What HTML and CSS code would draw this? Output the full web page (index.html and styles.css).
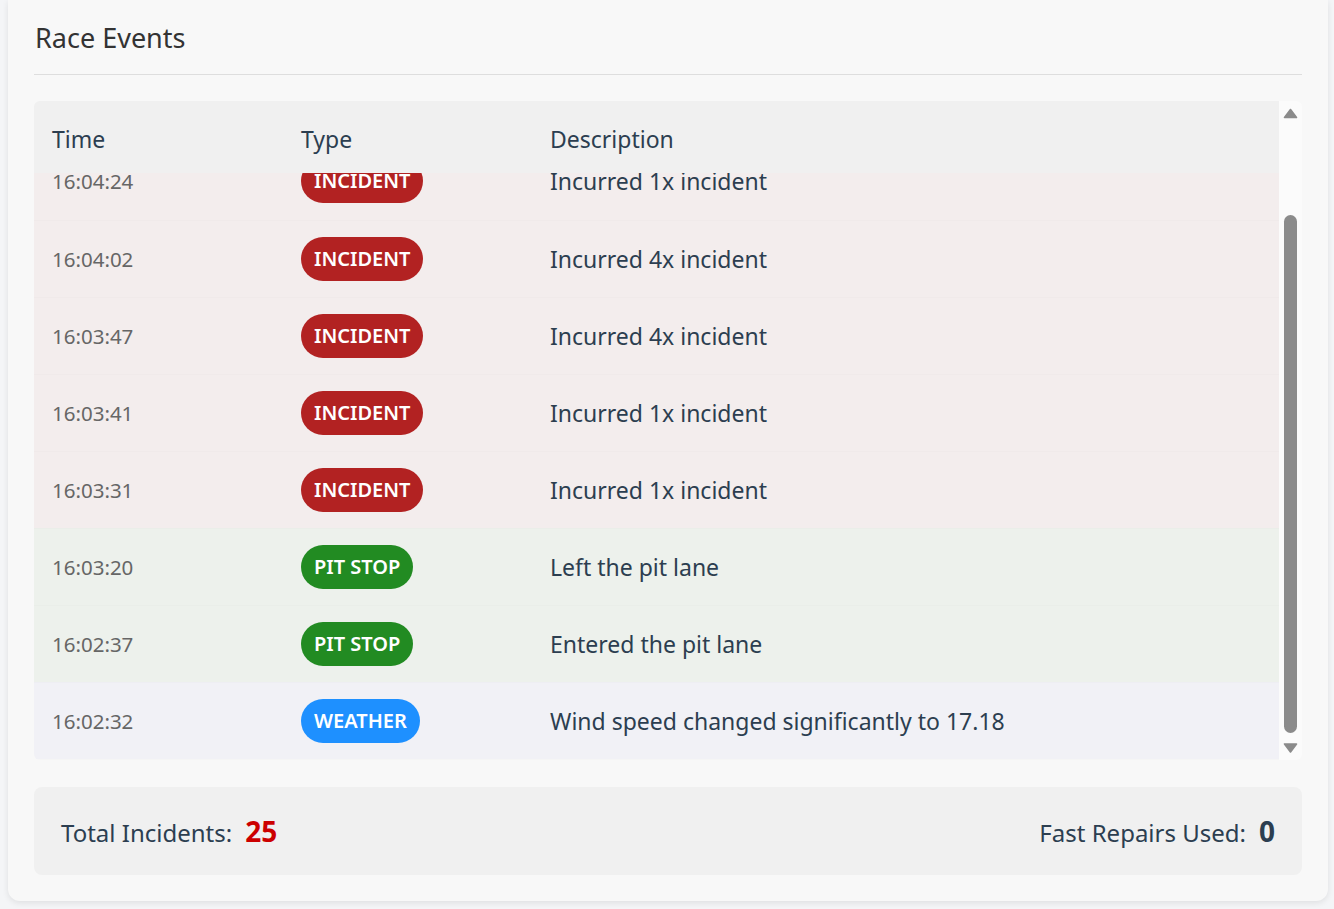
FILE: index.html
```html
<!DOCTYPE html>
<html lang="en">
<head>
<meta charset="utf-8">
<title>Race Events</title>
<link rel="stylesheet" href="styles.css">
</head>
<body>
<div class="page">
  <section class="card">
    <h2 class="card-title">Race Events</h2>
    <div class="events-frame">
      <div class="events-scroll">
        <table class="events">
          <thead>
            <tr>
              <th class="col-time">Time</th>
              <th class="col-type">Type</th>
              <th class="col-desc">Description</th>
            </tr>
          </thead>
          <tbody>
            <tr class="row-incident">
              <td class="time">16:04:24</td>
              <td><span class="badge badge-incident">INCIDENT</span></td>
              <td class="desc">Incurred 1x incident</td>
            </tr>
            <tr class="row-incident">
              <td class="time">16:04:02</td>
              <td><span class="badge badge-incident">INCIDENT</span></td>
              <td class="desc">Incurred 4x incident</td>
            </tr>
            <tr class="row-incident">
              <td class="time">16:03:47</td>
              <td><span class="badge badge-incident">INCIDENT</span></td>
              <td class="desc">Incurred 4x incident</td>
            </tr>
            <tr class="row-incident">
              <td class="time">16:03:41</td>
              <td><span class="badge badge-incident">INCIDENT</span></td>
              <td class="desc">Incurred 1x incident</td>
            </tr>
            <tr class="row-incident">
              <td class="time">16:03:31</td>
              <td><span class="badge badge-incident">INCIDENT</span></td>
              <td class="desc">Incurred 1x incident</td>
            </tr>
            <tr class="row-pit">
              <td class="time">16:03:20</td>
              <td><span class="badge badge-pit">PIT STOP</span></td>
              <td class="desc">Left the pit lane</td>
            </tr>
            <tr class="row-pit">
              <td class="time">16:02:37</td>
              <td><span class="badge badge-pit">PIT STOP</span></td>
              <td class="desc">Entered the pit lane</td>
            </tr>
            <tr class="row-weather">
              <td class="time">16:02:32</td>
              <td><span class="badge badge-weather">WEATHER</span></td>
              <td class="desc">Wind speed changed significantly to 17.18</td>
            </tr>
          </tbody>
        </table>
      </div>
      <div class="scrollbar" aria-hidden="true">
        <svg class="sb-arrow" width="23" height="20" viewBox="0 0 23 20"><path d="M11.5 8.5 L17.5 16.5 L5.5 16.5 Z" fill="#8b8b8b" stroke="#8b8b8b" stroke-width="1.6" stroke-linejoin="round"/></svg>
        <div class="sb-track">
          <div class="sb-thumb" style="margin-top: 94px; height: 518px;"></div>
        </div>
        <svg class="sb-arrow" width="23" height="20" viewBox="0 0 23 20"><path d="M5.5 4 L17.5 4 L11.5 12 Z" fill="#8b8b8b" stroke="#8b8b8b" stroke-width="1.6" stroke-linejoin="round"/></svg>
      </div>
    </div>
    <div class="summary">
      <div class="stat">
        <span class="stat-label">Total Incidents:</span>
        <span class="stat-value stat-danger">25</span>
      </div>
      <div class="stat">
        <span class="stat-label">Fast Repairs Used:</span>
        <span class="stat-value">0</span>
      </div>
    </div>
  </section>
</div>
<script src="script.js"></script>
</body>
</html>
```

FILE: styles.css
```css
* { box-sizing: border-box; }

html, body {
  margin: 0;
  padding: 0;
  background: #f4f5f7;
  font-family: "Noto Sans", "Open Sans", sans-serif;
}

.page {
  padding: 0 6px 7px 8px;
}

.card {
  background: #f8f8f8;
  border-radius: 0 0 12px 12px;
  box-shadow: 0 2px 6px rgba(0, 0, 0, 0.09);
  padding: 0 26px 26px;
}

.card-title {
  margin: 0 0 26px;
  padding: 20px 0 18px 1px;
  font-size: 27px;
  line-height: 36px;
  font-weight: 400;
  color: #333333;
  border-bottom: 1px solid #dedede;
}

.events-frame {
  display: flex;
  height: 659px;
  border-radius: 6px;
  overflow: hidden;
  background: #f8f8f8;
}

.events-scroll {
  flex: 1;
  min-width: 0;
  overflow-y: auto;
  scrollbar-width: none;
}

.events-scroll::-webkit-scrollbar {
  display: none;
}

.scrollbar {
  width: 23px;
  flex: none;
  display: flex;
  flex-direction: column;
  background: #fbfbfb;
}

.sb-arrow {
  display: block;
  flex: none;
}

.sb-track {
  flex: 1;
  display: flex;
  flex-direction: column;
  align-items: center;
}

.sb-thumb {
  width: 13px;
  border-radius: 7px;
  background: #8b8b8b;
}

.events {
  width: 100%;
  border-collapse: collapse;
  table-layout: fixed;
}

.events th {
  position: sticky;
  top: 0;
  z-index: 1;
  background: #f0f0f0;
  text-align: left;
  font-weight: 400;
  font-size: 23px;
  line-height: 28px;
  color: #2c3e50;
  padding: 24px 18px 20px;
}

.col-time { width: 20%; }
.col-type { width: 20%; }
.col-desc { width: 60%; }

.events td {
  padding: 16px 18px;
  vertical-align: middle;
  border-bottom: 1px solid rgba(0, 0, 0, 0.012);
  height: 77px;
}

.row-incident td { background: #f3eded; }
.row-pit td { background: #edf1ec; }
.row-weather td { background: #f1f1f6; }

.time {
  font-size: 20.5px;
  color: #666666;
}

.desc {
  font-size: 23px;
  color: #2c3e50;
}

.badge {
  display: inline-block;
  height: 44px;
  line-height: 44px;
  padding: 0 13px;
  border-radius: 22px;
  color: #ffffff;
  font-size: 20px;
  font-weight: 600;
  vertical-align: middle;
}

.badge-incident { background: #b22222; }
.badge-pit { background: #228b22; }
.badge-weather { background: #1e90ff; }

.summary {
  margin-top: 27px;
  height: 88px;
  background: #f0f0f0;
  border-radius: 8px;
  padding: 0 27px;
  display: flex;
  align-items: center;
  justify-content: space-between;
}

.stat {
  display: flex;
  align-items: baseline;
  gap: 13px;
}

.stat-label {
  font-size: 24px;
  color: #2c3e50;
}

.stat-value {
  font-size: 28px;
  font-weight: 700;
  color: #2c3e50;
}

.stat-danger { color: #cc0000; }
```

FILE: script.js
```js
var scroller = document.querySelector('.events-scroll');
if (scroller) {
  scroller.scrollTop = scroller.scrollHeight;
}
```
